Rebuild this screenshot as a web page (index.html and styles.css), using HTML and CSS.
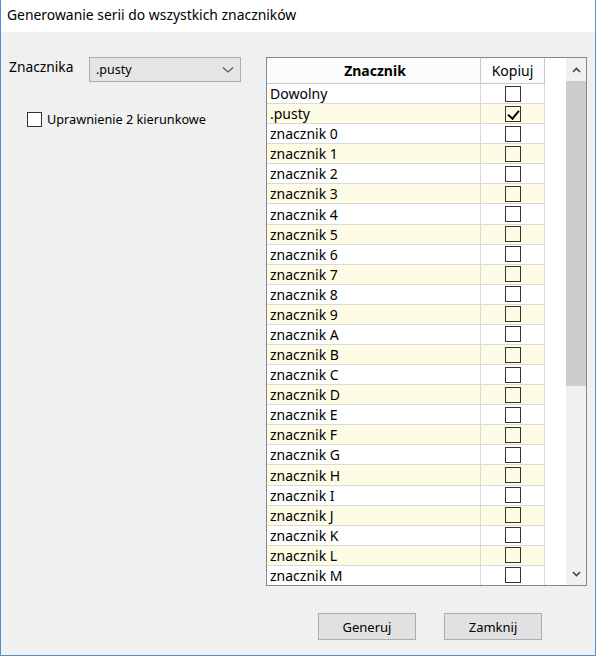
FILE: index.html
```html
<!DOCTYPE html>
<html lang="pl">
<head>
  <meta charset="UTF-8" />
  <title>Generowanie serii</title>
  <link rel="stylesheet" href="styles.css">
</head>
<body>
  <div class="window">
    <div class="titlebar">Generowanie serii do wszystkich znaczników</div>

    <div class="main">
      <div class="left">
        <div class="field">
          <span class="label">Znacznika</span>
          <div class="combo">
            <span>.pusty</span>
            <svg width="12" height="8" viewBox="0 0 12 8"><path d="M1 1.5 L6 6 L11 1.5" fill="none" stroke="#555" stroke-width="1.2"/></svg>
          </div>
        </div>
        <label class="check-row"><span class="box"></span>Uprawnienie 2 kierunkowe</label>
      </div>

      <div class="grid">
        <div class="grid-body">
          <div class="row head">
            <div class="c-name">Znacznik</div>
            <div class="c-copy">Kopiuj</div>
          </div>
          <div id="rows"></div>
        </div>
        <div class="scroll">
          <div class="arrow">
            <svg width="9" height="6" viewBox="0 0 9 6"><path d="M1 5 L4.5 1.5 L8 5" fill="none" stroke="#444" stroke-width="1.6"/></svg>
          </div>
          <div class="track"><div class="thumb"></div></div>
          <div class="arrow">
            <svg width="9" height="6" viewBox="0 0 9 6"><path d="M1 1 L4.5 4.5 L8 1" fill="none" stroke="#444" stroke-width="1.6"/></svg>
          </div>
        </div>
      </div>
    </div>

    <div class="buttons">
      <button class="btn">Generuj</button>
      <button class="btn">Zamknij</button>
    </div>
  </div>

  <script>
    let names = ["Dowolny", ".pusty"];
    "0123456789ABCDEFGHIJKLM".split("").forEach((c) => names.push("znacznik " + c));

    let rows = document.getElementById("rows");
    names.forEach((n, i) => {
      let row = document.createElement("div");
      row.className = i % 2 ? "row alt" : "row";

      let name = document.createElement("div");
      name.className = "c-name";
      name.innerText = n;

      let copy = document.createElement("div");
      copy.className = "c-copy";
      let box = document.createElement("span");
      box.className = n == ".pusty" ? "box checked" : "box";
      copy.appendChild(box);

      row.appendChild(name);
      row.appendChild(copy);
      rows.appendChild(row);
    });
  </script>
</body>
</html>
```

FILE: styles.css
```css
* {
  margin: 0;
  padding: 0;
  box-sizing: border-box;
}

body {
  background: #fff;
  font-family: "Noto Sans", "Open Sans", sans-serif;
  font-size: 14px;
  color: #000;
}

.window {
  width: 596px;
  height: 656px;
  background: #f0f0f0;
  border: 1px solid #4f8fd6;
  border-top: none;
  display: flex;
  flex-direction: column;
}

.titlebar {
  height: 32px;
  background: #fff;
  padding: 5px 0 0 6px;
  font-size: 13.9px;
}

.main {
  display: flex;
  padding-top: 25px;
}

.left {
  width: 265px;
  padding-left: 8px;
}

.field {
  display: flex;
  align-items: flex-start;
}

.label {
  width: 80px;
  font-size: 13.8px;
}

.combo {
  width: 152px;
  height: 25px;
  background: #e5e5e5;
  border: 1px solid #adadad;
  display: flex;
  align-items: center;
  justify-content: space-between;
  padding: 0 6px 0 6px;
  font-size: 12.5px;
}

.check-row {
  display: flex;
  align-items: center;
  gap: 5px;
  margin: 28px 0 0 18px;
  font-size: 12.7px;
}

.box {
  display: inline-block;
  width: 16px;
  height: 16px;
  border: 1px solid #333;
  background: transparent;
  position: relative;
}

.check-row .box {
  width: 15px;
  height: 15px;
  background: #fff;
}

.box.checked::after {
  content: "";
  position: absolute;
  left: 4px;
  top: 1px;
  width: 5px;
  height: 9px;
  border: solid #000;
  border-width: 0 2px 2px 0;
  transform: rotate(40deg);
}

.grid {
  width: 321px;
  height: 529px;
  border: 1px solid #828790;
  background: #fff;
  display: flex;
  overflow: hidden;
}

.grid-body {
  flex: 1;
}

.row {
  display: flex;
  height: 20.08px;
  border-bottom: 1px solid #d9d9d9;
  width: 278px;
}

.row.alt {
  background: #fefce4;
}

.row.head {
  height: 26px;
  background: #fcfcfc;
  border-bottom: 1px solid #c8c8c8;
}

.c-name {
  width: 214px;
  padding-left: 3px;
  border-right: 1px solid #d9d9d9;
  display: flex;
  align-items: center;
}

.c-copy {
  width: 64px;
  border-right: 1px solid #d9d9d9;
  display: flex;
  align-items: center;
  justify-content: center;
}

.head .c-name {
  font-weight: bold;
  justify-content: center;
  border-right-color: #c8c8c8;
}

.head .c-copy {
  border-right-color: #c8c8c8;
}

.scroll {
  width: 20px;
  background: #f0f0f0;
  display: flex;
  flex-direction: column;
}

.arrow {
  height: 23px;
  display: flex;
  align-items: center;
  justify-content: center;
}

.track {
  flex: 1;
}

.thumb {
  height: 305px;
  background: #cdcdcd;
}

.buttons {
  display: flex;
  justify-content: flex-end;
  gap: 28px;
  padding: 27px 53px 0 0;
}

.btn {
  width: 98px;
  height: 27px;
  background: #e1e1e1;
  border: 1px solid #adadad;
  font-family: "Noto Sans", "Open Sans", sans-serif;
  font-size: 13px;
  color: #000;
}
```
